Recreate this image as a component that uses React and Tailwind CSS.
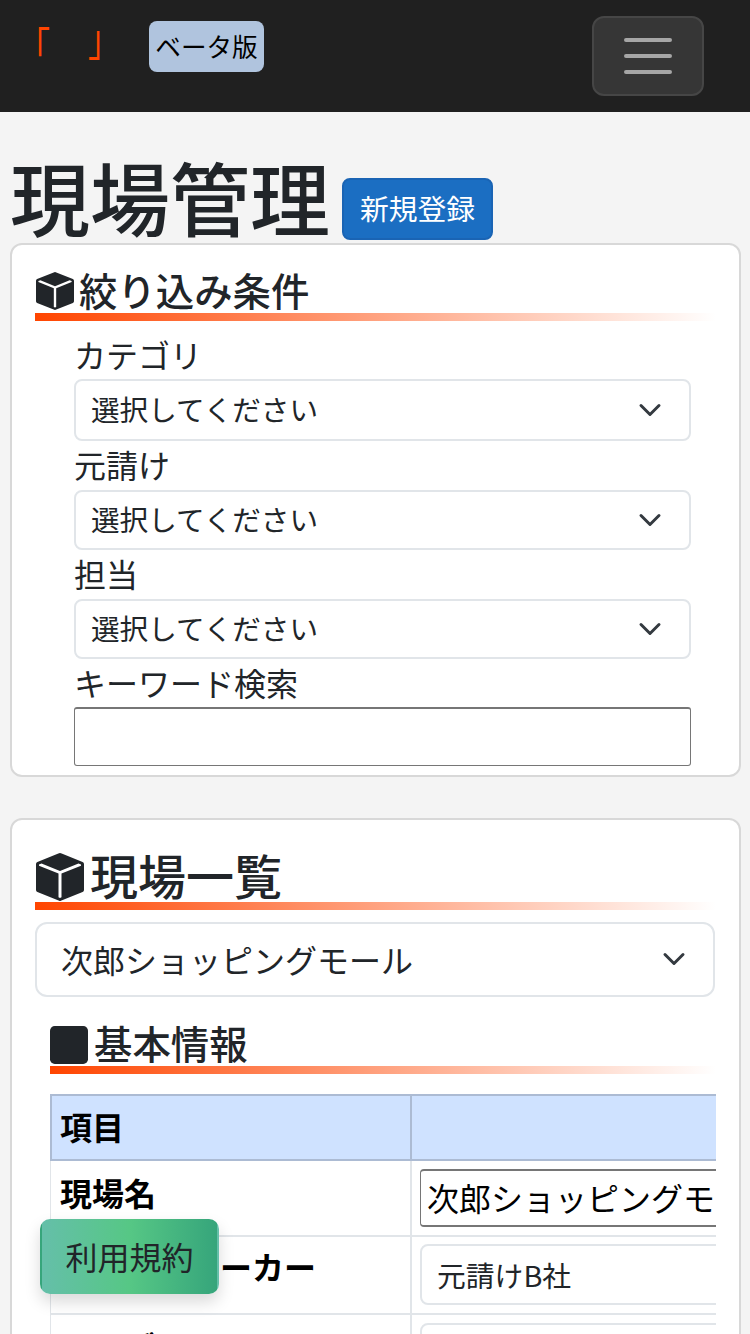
import { useState } from "react";
import { BsBoxFill, BsSquareFill } from "react-icons/bs";

const filters = [
  { label: "カテゴリ", height: "h-[62px]", leading: "leading-[49px]" },
  { label: "元請け", height: "h-[60px]", leading: "leading-[47px]" },
  { label: "担当", height: "h-[60px]", leading: "leading-[47px]" },
];

function Chevron() {
  return (
    <svg viewBox="0 0 16 16" className="size-6 shrink-0" fill="none">
      <path
        d="m2 5 6 6 6-6"
        stroke="#343a40"
        strokeWidth="2"
        strokeLinecap="round"
        strokeLinejoin="round"
      />
    </svg>
  );
}

function Underline() {
  return <div className="h-2 bg-linear-to-r/srgb from-[#ff4500] to-white" />;
}

function Navbar() {
  return (
    <header className="flex h-28 items-start bg-[#202020] pr-[46px] pl-5">
      <div className="mt-5 flex w-[98px] justify-between text-[32px] leading-[48px] text-[#ff4500]">
        <span className="-translate-x-[2px] translate-y-px scale-y-[1.4]">「</span>
        <span className="translate-x-[2px] -translate-y-2 scale-y-[1.4]">」</span>
      </div>
      <span className="mt-[21px] ml-[31px] flex h-[51px] w-[115px] items-center justify-center rounded-lg bg-[#b0c4de] text-[25.6px] text-black">
        ベータ版
      </span>
      <button className="mt-4 ml-auto flex h-20 w-28 items-center justify-center rounded-xl border-2 border-[#464646] bg-[#363636]">
        <svg viewBox="0 0 30 30" className="size-[60px]" fill="none">
          <path d="M4 7h22M4 15h22M4 23h22" stroke="#a6a6a6" strokeWidth="2" strokeLinecap="round" />
        </svg>
      </button>
    </header>
  );
}

function FilterCard() {
  const [keyword, setKeyword] = useState("");

  return (
    <section className="mx-[10px] mr-[9px] h-[534px] rounded-xl border-2 border-[#d8d8d8] bg-white px-[23px] pt-[22px]">
      <h2 className="flex h-[46px] items-center gap-[5px] text-[38.4px] font-medium">
        <BsBoxFill className="mt-[2px] ml-px size-[38px] shrink-0" />
        <span>絞り込み条件</span>
      </h2>
      <Underline />
      <div className="mr-[25px] ml-[39px] pt-[9px]">
        {filters.map((f) => (
          <div key={f.label}>
            <div className={`${f.leading} h-[49px] text-[32px]`}>{f.label}</div>
            <div
              className={`${f.height} flex items-center justify-between rounded-lg border-2 border-[#e1e5e9] pr-[27px] pb-px pl-[15px] text-[28.6px]`}
            >
              <span>選択してください</span>
              <Chevron />
            </div>
          </div>
        ))}
        <div className="h-[48px] text-[32px] leading-[46px]">キーワード検索</div>
        <input
          value={keyword}
          onChange={(e) => setKeyword(e.target.value)}
          className="block h-[59px] w-full rounded-[3px] border border-t-2 border-[#767676] bg-white px-2"
        />
      </div>
    </section>
  );
}

function Row({ label, height, labelTop, inputTop, children }) {
  return (
    <div className={`${height} flex border-b-2 border-[#e1e5e9]`}>
      <div
        className={`${labelTop} w-[362px] shrink-0 border-r-2 border-l border-[#e1e5e9] pl-[9px] text-[32px] leading-[48px] font-bold text-black`}
      >
        {label}
      </div>
      <div className={`${inputTop} pl-2`}>{children}</div>
    </div>
  );
}

function SiteCard() {
  return (
    <section className="mt-[41px] mr-[9px] ml-[10px] h-[900px] rounded-xl border-2 border-[#d8d8d8] bg-white px-[23px] pt-[28px]">
      <h2 className="flex h-[54px] items-center gap-[6px] text-[48px] leading-[54px] font-medium">
        <BsBoxFill className="mt-1 ml-px size-12 shrink-0" />
        <span className="-mt-[2px]">現場一覧</span>
      </h2>
      <Underline />
      <div className="mt-3 mr-px flex h-[75px] items-center justify-between rounded-xl border-2 border-[#e1e5e9] pr-[27px] pb-[2px] pl-6 text-[32px]">
        <span>次郎ショッピングモール</span>
        <Chevron />
      </div>
      <div className="mt-[23px] ml-[15px]">
        <h3 className="flex h-[46px] items-center gap-[6px] text-[38.4px] font-medium">
          <BsSquareFill className="mt-1 size-[38px] shrink-0" />
          <span>基本情報</span>
        </h3>
        <Underline />
        <div className="mt-5 w-[666px] overflow-hidden">
          <div className="flex h-[67px] w-[1100px] border-y-2 border-[#acbbd3] bg-[#cfe2ff]">
            <div className="w-[362px] shrink-0 border-r-2 border-l-2 border-[#acbbd3] pt-[6px] pl-2 text-[32px] leading-[48px] font-bold text-black">
              項目
            </div>
          </div>
          <div className="w-[1100px]">
            <Row label="現場名" height="h-[76px]" labelTop="pt-[7px]" inputTop="pt-2">
              <div className="flex h-[58px] w-[600px] items-center rounded-[4px] border-2 border-l border-[#767676] pb-[2px] pl-[6px] text-[32px] text-black">
                次郎ショッピングモール
              </div>
            </Row>
            <Row label="元請け・メーカー" height="h-[78px]" labelTop="pt-[5px]" inputTop="pt-[7px]">
              <div className="flex h-[61px] w-[600px] items-center rounded-lg border-2 border-[#e1e5e9] pl-[15px] text-[28.8px]">
                元請けB社
              </div>
            </Row>
            <Row label="カテゴリ" height="h-[78px]" labelTop="pt-[7px]" inputTop="pt-2">
              <div className="flex h-[61px] w-[600px] items-center rounded-lg border-2 border-[#e1e5e9] pl-[15px] text-[28.8px]">
                選択してください
              </div>
            </Row>
          </div>
        </div>
      </div>
    </section>
  );
}

export default function App() {
  return (
    <div className="relative h-[1334px] w-[750px] overflow-hidden bg-[#f4f4f4] font-['Noto_Sans_CJK_JP',sans-serif] text-[#212529]">
      <Navbar />
      <div className="flex h-[131px] items-end gap-3 pl-[10px]">
        <h1 className="h-[91px] text-[80px] leading-[86px] font-medium">現場管理</h1>
        <button className="mb-[3px] h-[62px] w-[151px] rounded-lg border-2 border-[#1a64b4] bg-[#1b6ec2] pb-[2px] text-[28.8px] leading-none text-white">
          新規登録
        </button>
      </div>
      <FilterCard />
      <SiteCard />
      <button className="absolute top-[1219px] left-[40px] h-[75px] w-[179px] rounded-[10px] border-2 border-transparent bg-linear-to-r/srgb from-[#65bfa9] via-[#56c785] to-[#36a57b] pb-px text-[32px] leading-none shadow-[0_8px_16px_rgba(0,0,0,0.15)]">
        利用規約
      </button>
    </div>
  );
}
